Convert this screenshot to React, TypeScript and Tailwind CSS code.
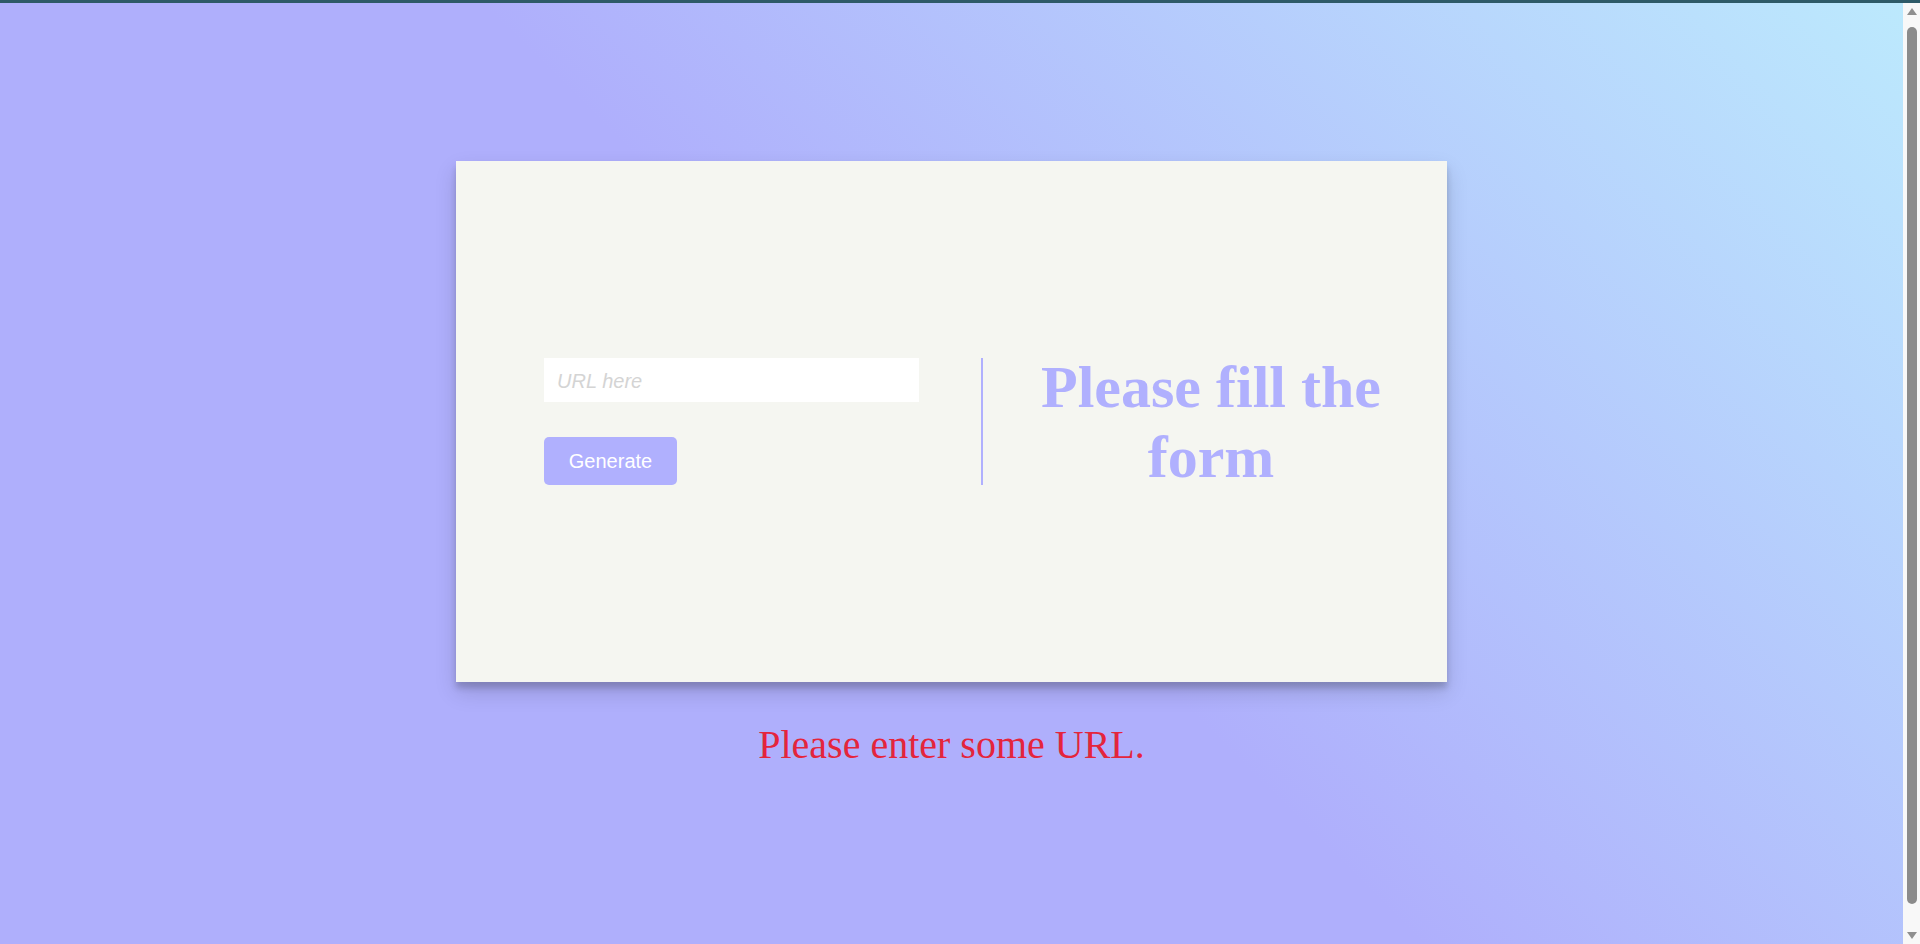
import React from "react";

function Scrollbar() {
  return (
    <div className="w-[17px] h-full bg-[#f8f8f8] flex flex-col items-center">
      <div className="h-[17px] w-full flex items-center justify-center">
        <svg width="10" height="7" viewBox="0 0 10 7">
          <polygon points="5,0 10,7 0,7" fill="#8f8f8f" />
        </svg>
      </div>
      <div className="mt-[7px] w-[10px] h-[877px] rounded-full bg-[#8b8b8b]" />
      <div className="flex-1" />
      <div className="h-[17px] w-full flex items-center justify-center">
        <svg width="10" height="7" viewBox="0 0 10 7">
          <polygon points="0,0 10,0 5,7" fill="#8f8f8f" />
        </svg>
      </div>
    </div>
  );
}

export default function App() {
  return (
    <div className="h-[944px] w-full flex flex-col overflow-hidden">
      <div className="h-[3px] w-full bg-[#2e5a68]" />
      <div className="flex-1 flex flex-row min-h-0">
        <div className="flex-1 flex flex-col items-center bg-[linear-gradient(45deg,#afaffc_50%,#bce9fd_100%)]">
          <div className="mt-[158px] w-[991px] h-[521px] bg-[#f5f6f1] shadow-[0_10px_20px_rgba(0,0,0,0.15),0_6px_6px_rgba(0,0,0,0.16)] flex items-center pl-[88px]">
            <div className="w-[375px] flex flex-col items-start">
              <input
                type="text"
                placeholder="URL here"
                className="w-[375px] h-[44px] bg-white px-[13px] pt-[3px] text-[20px] italic text-gray-700 placeholder:text-[#d4d4d4] outline-none font-['Liberation_Sans',Arial,sans-serif]"
              />
              <button className="mt-[35px] w-[133px] h-[48px] rounded-[5px] bg-[#b0b0fe] text-white text-[20px] leading-[23px] font-['Liberation_Sans',Arial,sans-serif]">
                Generate
              </button>
            </div>
            <div className="ml-[62px] self-center h-[127px] w-[2px] bg-[#b0b0fe]" />
            <div className="w-[456px] flex items-center justify-center">
              <h1 className="w-[454px] text-center text-[60px] leading-[70px] font-bold text-[#b0b0fe] font-['Liberation_Serif','Times_New_Roman',serif]">
                Please fill the form
              </h1>
            </div>
          </div>
          <p className="mt-[40px] text-[40px] leading-[46px] text-[#e4253c] font-['Liberation_Serif','Times_New_Roman',serif]">
            Please enter some URL.
          </p>
        </div>
        <Scrollbar />
      </div>
    </div>
  );
}
